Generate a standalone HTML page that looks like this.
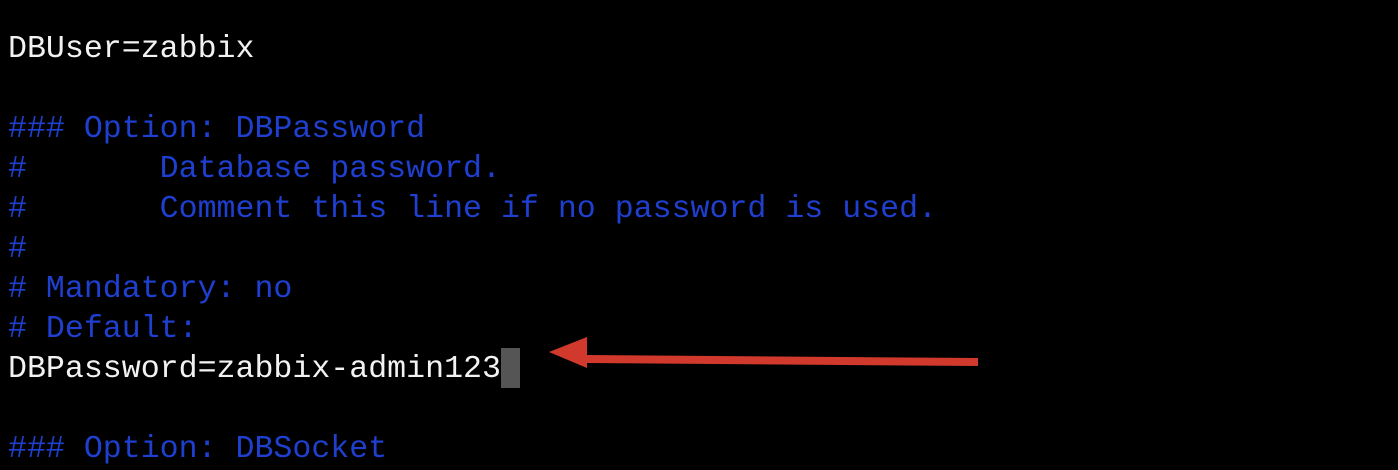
<!DOCTYPE html>
<html><head><style>
html,body{margin:0;padding:0;background:#000;width:1398px;height:440px;overflow:hidden}
pre{margin:0;position:absolute;left:8px;top:30px;font-family:"Liberation Mono",monospace;font-size:31.6px;line-height:40px;color:#f2f2f2;white-space:pre}
.b{color:#1f3fcf}
.cur{display:inline-block;width:19px;height:40px;background:#555;vertical-align:top;margin-top:-2px}
</style></head><body>
<pre>DBUser=zabbix

<span class="b">### Option: DBPassword</span>
<span class="b">#       Database password.</span>
<span class="b">#       Comment this line if no password is used.</span>
<span class="b">#</span>
<span class="b"># Mandatory: no</span>
<span class="b"># Default:</span>
DBPassword=zabbix-admin123<span class="cur"></span>

<span class="b">### Option: DBSocket</span></pre>
<svg width="1398" height="440" style="position:absolute;left:0;top:0">
<polygon points="587,355 978,358 978,366 587,363" fill="#d0392b"/>
<polygon points="549,352 587,337 587,368" fill="#d0392b"/>
</svg>
</body></html>
